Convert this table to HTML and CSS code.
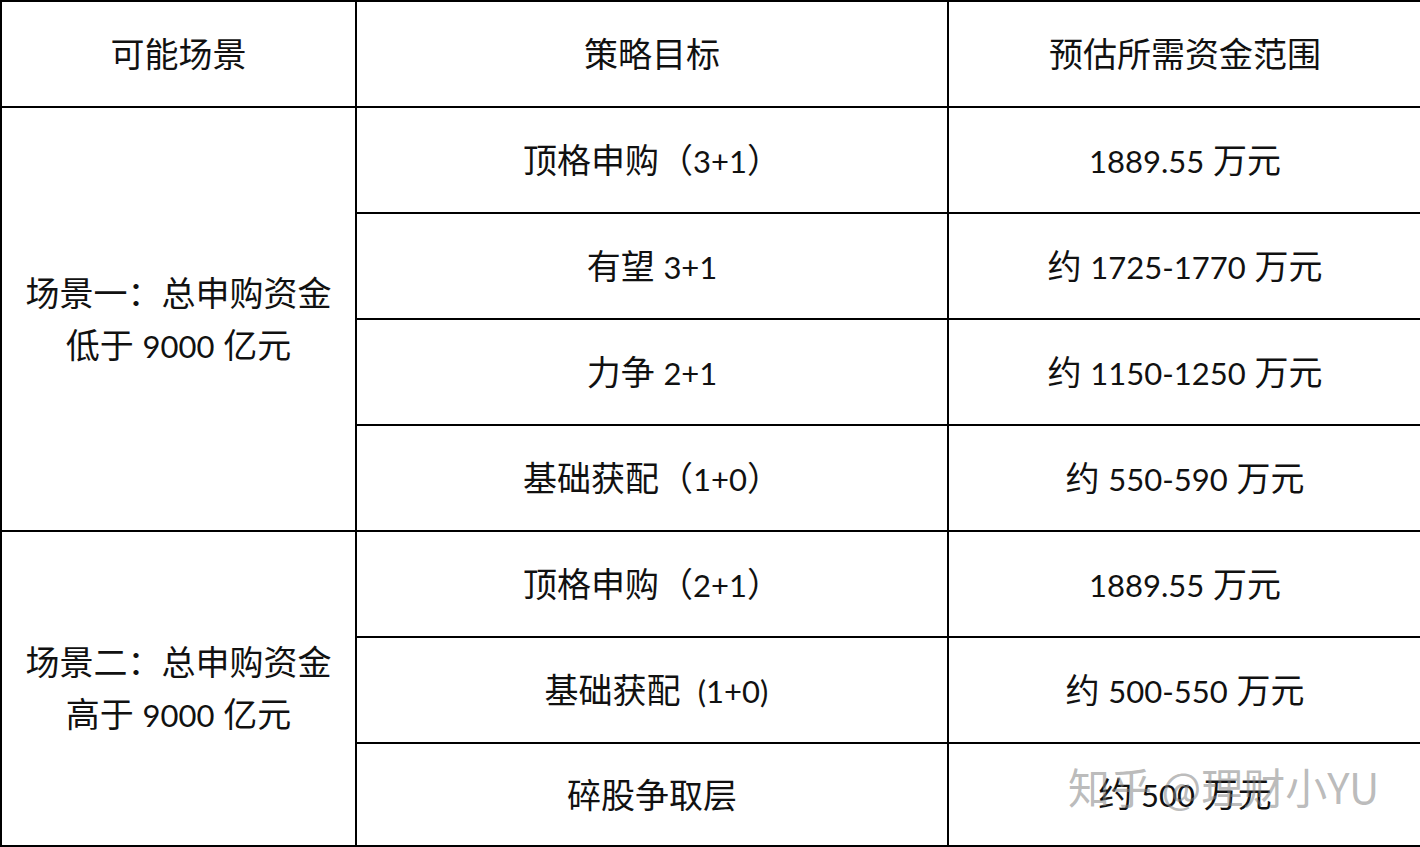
FILE: index.html
```html
<!DOCTYPE html>
<html lang="zh">
<head>
<meta charset="utf-8">
<link rel="stylesheet" href="styles.css">
</head>
<body>
<div class="page">
<table class="plan">
  <colgroup>
    <col class="c1"><col class="c2"><col class="c3">
  </colgroup>
  <tr class="head">
    <td>可能场景</td><td>策略目标</td><td>预估所需资金范围</td>
  </tr>
  <tr>
    <td rowspan="4" class="scene">场景一：总申购资金<br>低于 <span class="n">9000</span> 亿元</td>
    <td>顶格申购（<span class="n">3+1</span>）</td><td><span class="n">1889.55</span> 万元</td>
  </tr>
  <tr><td>有望 <span class="n">3+1</span></td><td>约 <span class="n">1725-1770</span> 万元</td></tr>
  <tr><td>力争 <span class="n">2+1</span></td><td>约 <span class="n">1150-1250</span> 万元</td></tr>
  <tr><td>基础获配（<span class="n">1+0</span>）</td><td>约 <span class="n">550-590</span> 万元</td></tr>
  <tr>
    <td rowspan="3" class="scene">场景二：总申购资金<br>高于 <span class="n">9000</span> 亿元</td>
    <td>顶格申购（<span class="n">2+1</span>）</td><td><span class="n">1889.55</span> 万元</td>
  </tr>
  <tr><td>&nbsp;基础获配&nbsp;&nbsp;<span class="n">(1+0)</span></td><td>约 <span class="n">500-550</span> 万元</td></tr>
  <tr class="last"><td>碎股争取层</td><td>约 <span class="n">500</span> 万元</td></tr>
</table>
<div class="mark">知乎 @理财小YU</div>
</div>
</body>
</html>
```

FILE: styles.css
```css
html, body {
  margin: 0;
  padding: 0;
  background: #fff;
}
.page {
  position: relative;
  width: 1420px;
  height: 847px;
  overflow: hidden;
}
.plan {
  border-collapse: collapse;
  width: 1421px;
  table-layout: fixed;
  font-family: "Lato", "Noto Sans CJK SC", sans-serif;
  font-size: 34px;
  color: #111;
}
.c1 { width: 355px; }
.c2 { width: 592px; }
.c3 { width: 474px; }
.plan td {
  border: 2px solid #000;
  height: 104px;
  padding: 0;
  text-align: center;
  vertical-align: middle;
  line-height: 40px;
}
.plan .last td {
  height: 101px;
}
.plan .n {
  font-size: 31px;
}
.plan td.scene {
  line-height: 52px;
}
.mark {
  position: absolute;
  left: 1068px;
  top: 760px;
  font-family: "Noto Sans CJK SC", sans-serif;
  font-size: 42px;
  line-height: 52px;
  color: rgba(130, 130, 130, 0.55);
}
```
